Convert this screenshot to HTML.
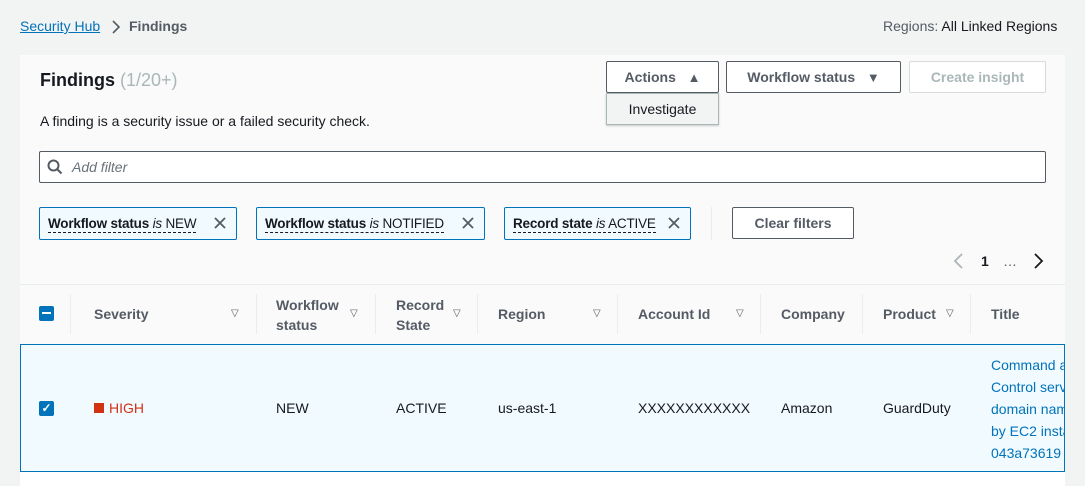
<!DOCTYPE html>
<html><head><style>
*{box-sizing:border-box;margin:0;padding:0}
body{width:1085px;height:486px;overflow:hidden;background:#f2f3f3;font-family:"Liberation Sans",sans-serif;font-size:14px;color:#16191f;position:relative}
.a{position:absolute}
.btn{position:absolute;border:1px solid #545b64;background:#fff;color:#545b64;font-weight:bold;font-size:14px;display:flex;align-items:center;justify-content:center;border-radius:2px}
.tok{position:absolute;top:207px;height:33px;border:1px solid #0073bb;background:#f1faff;border-radius:2px;display:flex;align-items:center;padding-left:8px;font-size:13.5px;white-space:nowrap;letter-spacing:-0.2px}
.tok b{font-weight:bold}
.tok span{border-bottom:1px dashed #16191f;line-height:17px}
.x{position:absolute;right:8px;top:7px}
.th{position:absolute;top:295px;font-weight:bold;color:#545b64;font-size:14px;line-height:20px}
.sep{position:absolute;top:294px;width:1px;height:40px;background:#eaeded}
.tri{position:absolute;top:308px;font-size:10px;color:#545b64}
.td{position:absolute;top:400px;font-size:14px}
</style></head><body>
<div class="a" style="left:20px;top:18px;color:#0073bb;text-decoration:underline">Security Hub</div>
<svg class="a" style="left:110px;top:19px" width="12" height="16" viewBox="0 0 12 16"><path d="M3 2l6 6-6 6" fill="none" stroke="#545b64" stroke-width="1.6"/></svg>
<div class="a" style="left:129px;top:18px;color:#545b64;font-weight:bold">Findings</div>
<div class="a" style="left:883px;top:18px;color:#545b64">Regions: <span style="color:#16191f">All Linked Regions</span></div>

<div class="a" style="left:20px;top:55px;width:1045px;height:431px;background:#fafafa"></div>
<div class="a" style="left:40px;top:70px;font-size:18px;font-weight:bold">Findings <span style="color:#aab7b8;font-weight:normal">(1/20+)</span></div>
<div class="a" style="left:40px;top:113px">A finding is a security issue or a failed security check.</div>

<div class="btn" style="left:606px;top:61px;width:113px;height:32px">Actions &nbsp;&nbsp;<span style="font-size:13px">&#x25B2;</span></div>
<div class="a" style="left:606px;top:93px;width:113px;height:32px;background:#f2f3f3;border:1px solid #aab7b8;box-shadow:0 1px 2px rgba(0,0,0,.2);display:flex;align-items:center;justify-content:center;color:#16191f">Investigate</div>
<div class="btn" style="left:726px;top:61px;width:175px;height:32px">Workflow status &nbsp;&nbsp;<span style="font-size:13px">&#x25BC;</span></div>
<div class="btn" style="left:909px;top:61px;width:137px;height:32px;border-color:#d5dbdb;color:#aab7b8">Create insight</div>

<div class="a" style="left:39px;top:151px;width:1007px;height:32px;background:#fff;border:1px solid #545b64;border-radius:2px"></div>
<svg class="a" style="left:47px;top:159px" width="16" height="16" viewBox="0 0 16 16"><circle cx="6.5" cy="6.5" r="5" fill="none" stroke="#545b64" stroke-width="2"/><path d="M10 10l4.5 4.5" stroke="#545b64" stroke-width="2"/></svg>
<div class="a" style="left:72px;top:159px;color:#687078;font-style:italic">Add filter</div>

<div class="tok" style="left:39px;width:198px"><span><b>Workflow status</b> <i>is</i> NEW</span><svg class="x" width="16" height="16" viewBox="0 0 16 16"><path d="M3 3l10 10M13 3L3 13" stroke="#545b64" stroke-width="1.8"/></svg></div>
<div class="tok" style="left:256px;width:229px"><span><b>Workflow status</b> <i>is</i> NOTIFIED</span><svg class="x" width="16" height="16" viewBox="0 0 16 16"><path d="M3 3l10 10M13 3L3 13" stroke="#545b64" stroke-width="1.8"/></svg></div>
<div class="tok" style="left:504px;width:187px"><span><b>Record state</b> <i>is</i> ACTIVE</span><svg class="x" width="16" height="16" viewBox="0 0 16 16"><path d="M3 3l10 10M13 3L3 13" stroke="#545b64" stroke-width="1.8"/></svg></div>
<div class="a" style="left:711px;top:207px;width:1px;height:33px;background:#eaeded"></div>
<div class="btn" style="left:732px;top:207px;width:122px;height:32px">Clear filters</div>

<svg class="a" style="left:952px;top:252px" width="14" height="18" viewBox="0 0 14 18"><path d="M10 2L3 9l7 7" fill="none" stroke="#aab7b8" stroke-width="1.8"/></svg>
<div class="a" style="left:981px;top:253px;font-weight:bold">1</div>
<div class="a" style="left:1003px;top:253px;color:#545b64">…</div>
<svg class="a" style="left:1031px;top:252px" width="14" height="18" viewBox="0 0 14 18"><path d="M4 2l7 7-7 7" fill="none" stroke="#16191f" stroke-width="1.8"/></svg>

<div class="a" style="left:20px;top:284px;width:1045px;height:1px;background:#eaeded"></div>
<div class="a" style="left:39px;top:306px;width:15px;height:15px;background:#0073bb;border-radius:2px"><div style="position:absolute;left:3px;top:6px;width:9px;height:2px;background:#fff"></div></div>
<div class="sep" style="left:70px"></div>
<div class="th" style="left:94px;top:304px">Severity</div><div class="tri" style="left:231px">&#x25BD;</div>
<div class="sep" style="left:256px"></div>
<div class="th" style="left:276px">Workflow<br>status</div><div class="tri" style="left:350px">&#x25BD;</div>
<div class="sep" style="left:375px"></div>
<div class="th" style="left:396px">Record<br>State</div><div class="tri" style="left:453px">&#x25BD;</div>
<div class="sep" style="left:477px"></div>
<div class="th" style="left:498px;top:304px">Region</div><div class="tri" style="left:593px">&#x25BD;</div>
<div class="sep" style="left:617px"></div>
<div class="th" style="left:638px;top:304px">Account Id</div><div class="tri" style="left:736px">&#x25BD;</div>
<div class="sep" style="left:760px"></div>
<div class="th" style="left:781px;top:304px">Company</div>
<div class="sep" style="left:862px"></div>
<div class="th" style="left:883px;top:304px">Product</div><div class="tri" style="left:946px">&#x25BD;</div>
<div class="sep" style="left:970px"></div>
<div class="th" style="left:991px;top:304px">Title</div>

<div class="a" style="left:20px;top:344px;width:1045px;height:128px;background:#f1faff;border:1px solid #0073bb;overflow:hidden"></div>
<div class="a" style="left:39px;top:401px;width:15px;height:15px;background:#0073bb;border-radius:2px;color:#fff;font-size:12px;line-height:15px;text-align:center;font-weight:bold">&#x2713;</div>
<div class="a" style="left:94px;top:403px;width:10px;height:10px;background:#d13212"></div>
<div class="td" style="left:109px;color:#d13212">HIGH</div>
<div class="td" style="left:276px">NEW</div>
<div class="td" style="left:396px">ACTIVE</div>
<div class="td" style="left:498px">us-east-1</div>
<div class="td" style="left:638px">XXXXXXXXXXXX</div>
<div class="td" style="left:781px">Amazon</div>
<div class="td" style="left:883px">GuardDuty</div>
<div class="a" style="left:991px;top:354px;width:74px;overflow:hidden;white-space:nowrap;color:#0073bb;line-height:22px">Command a<br>Control serv<br>domain nam<br>by EC2 insta<br>043a73619</div>
<div class="a" style="left:20px;top:472px;width:1045px;height:14px;background:#fff"></div>
</body></html>
